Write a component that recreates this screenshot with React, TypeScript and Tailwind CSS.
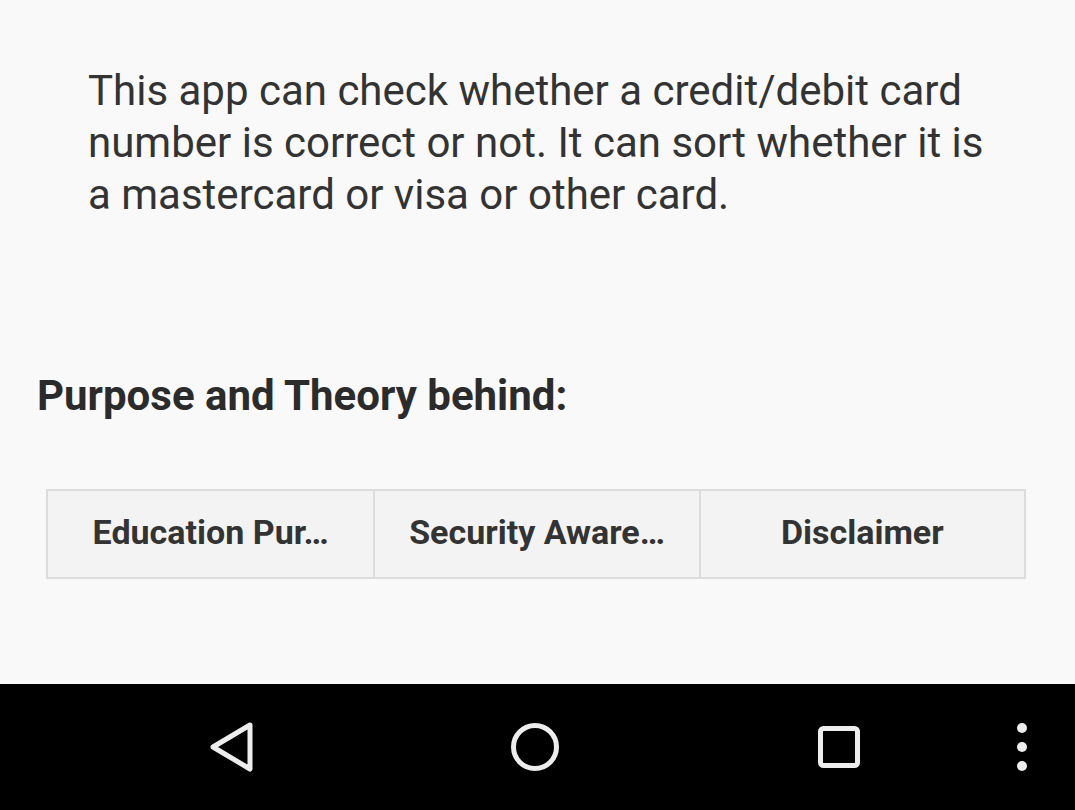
import React from 'react';

const tabs = ['Education Pur…', 'Security Aware…', 'Disclaimer'];

function NavBar() {
    return (
        <div className="h-[126px] bg-black flex items-center">
            <svg className="ml-[208px]" width="48" height="54" viewBox="0 0 48 54" fill="none">
                <path d="M42 5 L5 27 L42 49 Z" stroke="#ededed" strokeWidth="5" strokeLinejoin="round" />
            </svg>
            <svg className="ml-[253px]" width="52" height="52" viewBox="0 0 52 52" fill="none">
                <circle cx="26" cy="26" r="21.5" stroke="#ededed" strokeWidth="5" />
            </svg>
            <svg className="ml-[255px]" width="46" height="46" viewBox="0 0 46 46" fill="none">
                <rect x="4.5" y="4.5" width="37" height="37" rx="3" stroke="#ededed" strokeWidth="5" />
            </svg>
            <svg className="ml-[154px]" width="12" height="52" viewBox="0 0 12 52" fill="#ededed">
                <circle cx="6" cy="7" r="5" />
                <circle cx="6" cy="26" r="5" />
                <circle cx="6" cy="45" r="5" />
            </svg>
        </div>
    );
}

export default function App() {
    return (
        <div className="w-[1075px] h-[810px] flex flex-col overflow-hidden bg-[#f9f9f9] text-[#333333]" style={{ fontFamily: 'Roboto, "Liberation Sans", sans-serif' }}>
            <div className="h-[684px] flex flex-col overflow-hidden">
                <p className="mt-[65px] pl-[88px] pr-[60px] text-[42px] leading-[52px] text-[#333333]">
                    This app can check whether a credit/debit card number is correct or not. It can sort whether it is a mastercard or visa or other card.
                </p>
                <h2 className="mt-[149px] pl-[37px] text-[42px] leading-[52px] font-bold text-[#2b2b2b]">
                    Purpose and Theory behind:
                </h2>
                <div className="mt-[67px] ml-[46px] mr-[49px] grid grid-cols-3 h-[90px] border-2 border-[#dcdcdc] bg-[#f3f3f3]">
                    {tabs.map((t, i) => (
                        <div
                            key={t}
                            className={`flex items-center justify-center pb-[4px] text-[34px] font-bold text-[#333333] ${i > 0 ? 'border-l-2 border-[#dcdcdc]' : ''}`}
                        >
                            {t}
                        </div>
                    ))}
                </div>
            </div>
            <NavBar />
        </div>
    );
}
